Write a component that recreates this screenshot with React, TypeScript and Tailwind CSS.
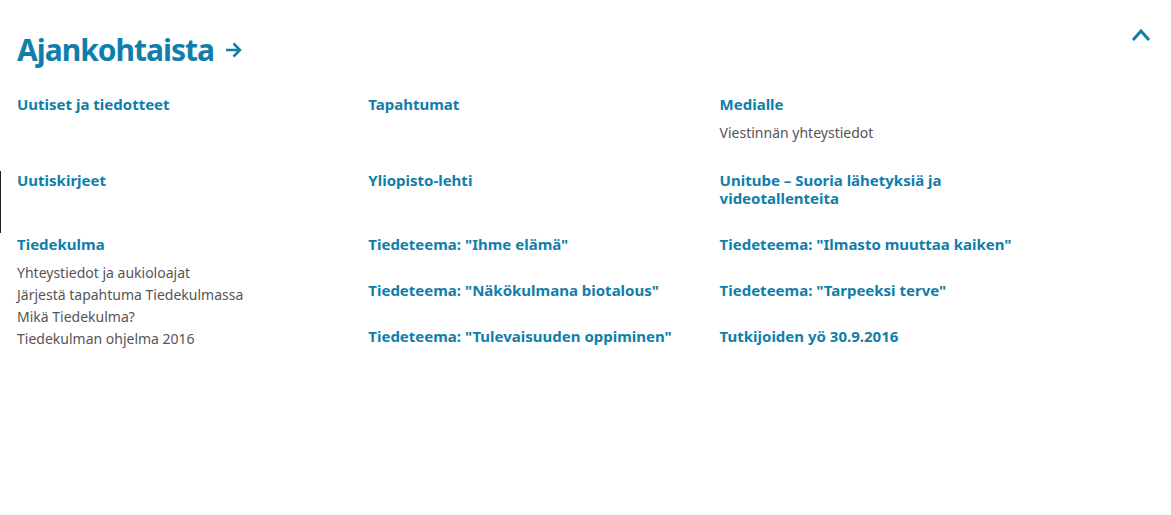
import React from "react";

type Section = { title: string; links?: string[] };

function Block({ title, links = [] }: Section) {
  return (
    <section className="pb-[26px] pl-[17px]">
      <h3 className="max-w-72 text-[15px] leading-[18px] font-bold text-[#107eab] sm:max-w-80">
        <a href="#">{title}</a>
      </h3>
      {links.length > 0 && (
        <ul className="-mb-px pt-[9px] text-sm leading-[22px] text-[#555]">
          {links.map((link) => (
            <li key={link}>
              <a href="#">{link}</a>
            </li>
          ))}
        </ul>
      )}
    </section>
  );
}

const tiedekulma = [
  "Yhteystiedot ja aukioloajat",
  "Järjestä tapahtuma Tiedekulmassa",
  "Mikä Tiedekulma?",
  "Tiedekulman ohjelma 2016",
];

export default function App() {
  return (
    <main className="bg-white font-['Noto_Sans',sans-serif]">
      <header className="flex items-start justify-between pt-7 pr-5 pl-[17px]">
        <h2 className="text-[30px] leading-[44px] font-bold tracking-[-1px] text-[#107eab]">
          <a href="#" className="flex items-center gap-3">
            Ajankohtaista
            <svg width="16" height="16" viewBox="0 0 16 16" fill="none" stroke="currentColor" strokeWidth="2.5" aria-hidden="true">
              <path d="M0 8H14M7.5 1.5L14 8L7.5 14.5" />
            </svg>
          </a>
        </h2>
        <button type="button" aria-label="Sulje" className="text-[#107eab]">
          <svg width="20" height="14" viewBox="0 0 20 14" fill="none" stroke="currentColor" strokeWidth="3" aria-hidden="true">
            <path d="M2 12L10 3L18 12" />
          </svg>
        </button>
      </header>
      <div className="flex flex-col gap-0.5 pt-[23px]">
        <div className="grid grid-cols-[30%_30%_1fr]">
          <Block title="Uutiset ja tiedotteet" />
          <Block title="Tapahtumat" />
          <Block title="Medialle" links={["Viestinnän yhteystiedot"]} />
        </div>
        <div className="grid grid-cols-[30%_30%_1fr] shadow-[inset_1px_0_0_#222]">
          <Block title="Uutiskirjeet" />
          <Block title="Yliopisto-lehti" />
          <Block title="Unitube – Suoria lähetyksiä ja videotallenteita" />
        </div>
        <div className="grid grid-cols-[30%_30%_1fr]">
          <Block title="Tiedekulma" links={tiedekulma} />
          <div className="flex flex-col gap-0.5">
            <Block title={'Tiedeteema: "Ihme elämä"'} />
            <Block title={'Tiedeteema: "Näkökulmana biotalous"'} />
            <Block title={'Tiedeteema: "Tulevaisuuden oppiminen"'} />
          </div>
          <div className="flex flex-col gap-0.5">
            <Block title={'Tiedeteema: "Ilmasto muuttaa kaiken"'} />
            <Block title={'Tiedeteema: "Tarpeeksi terve"'} />
            <Block title="Tutkijoiden yö 30.9.2016" />
          </div>
        </div>
      </div>
    </main>
  );
}
